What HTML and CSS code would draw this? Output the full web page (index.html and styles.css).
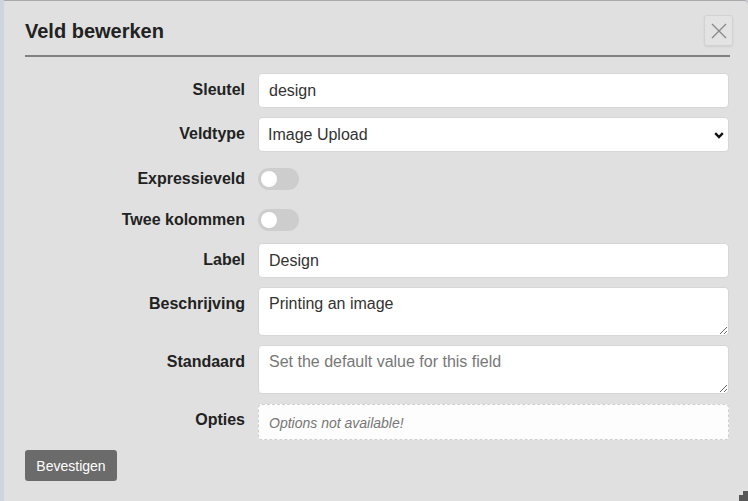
FILE: index.html
```html
<!DOCTYPE html>
<html lang="nl">
<head>
<meta charset="utf-8">
<title>Veld bewerken</title>
<link rel="stylesheet" href="styles.css">
</head>
<body>
<div class="modal">
  <div class="header">
    <h2 class="title">Veld bewerken</h2>
    <button class="close" type="button" aria-label="Sluiten">
      <svg width="16" height="16" viewBox="0 0 16 16"><path d="M1 1 L15 15 M15 1 L1 15" stroke="#8a8a8a" stroke-width="1.4" fill="none"/></svg>
    </button>
  </div>
  <div class="rule"></div>
  <form class="form">
    <label class="lbl">Sleutel</label>
    <input class="field" type="text" value="design">

    <label class="lbl">Veldtype</label>
    <div class="select-wrap">
      <select class="field select"><option>Image Upload</option></select>
      <svg class="chev" width="10" height="7" viewBox="0 0 10 7"><polyline points="1.2,1.2 5,5 8.8,1.2" fill="none" stroke="#111" stroke-width="2.4"/></svg>
    </div>

    <label class="lbl lbl-toggle">Expressieveld</label>
    <div class="toggle-cell"><span class="toggle"><span class="knob"></span></span></div>

    <label class="lbl lbl-toggle">Twee kolommen</label>
    <div class="toggle-cell"><span class="toggle"><span class="knob"></span></span></div>

    <label class="lbl">Label</label>
    <input class="field" type="text" value="Design">

    <label class="lbl">Beschrijving</label>
    <textarea class="field area">Printing an image</textarea>

    <label class="lbl">Standaard</label>
    <textarea class="field area" placeholder="Set the default value for this field"></textarea>

    <label class="lbl lbl-opties">Opties</label>
    <div class="opties">Options not available!</div>
  </form>
  <button class="submit" type="button">Bevestigen</button>
</div>
<div class="grip"><span class="g1"></span><span class="g2"></span></div>
</body>
</html>
```

FILE: styles.css
```css
html, body {
  margin: 0;
  padding: 0;
}
body {
  background: #cdd6dc;
  font-family: "Liberation Sans", Arial, sans-serif;
  color: #222;
  overflow: hidden;
  height: 501px;
}
.modal {
  margin-left: 4px;
  height: 501px;
  box-sizing: border-box;
  background: #e0e0e0;
  border-top: 1px solid #a9a9a9;
  border-top-right-radius: 4px;
  padding: 14px 18px 0 21px;
}
.header {
  display: flex;
  justify-content: space-between;
  align-items: center;
  height: 31px;
}
.title {
  margin: 0;
  font-size: 20px;
  line-height: 24px;
  font-weight: bold;
  color: #222;
}
.close {
  width: 29px;
  height: 31px;
  margin-right: -3px;
  padding: 0;
  display: flex;
  align-items: center;
  justify-content: center;
  background: #e3e3e3;
  border: 1px solid #d2d2d2;
  border-radius: 3px;
  box-shadow: 0 1px 2px rgba(0,0,0,0.08);
}
.rule {
  margin-top: 9px;
  height: 2px;
  background: #808080;
}
.form {
  margin-top: 16px;
  margin-right: 1px;
  display: grid;
  grid-template-columns: 220px 1fr;
  column-gap: 13px;
  row-gap: 9px;
}
.lbl {
  text-align: right;
  font-weight: bold;
  font-size: 16px;
  line-height: 20px;
  padding-top: 7px;
  color: #222;
}
.lbl-toggle {
  padding-top: 8px;
}
.lbl-opties {
  padding-top: 7px;
}
.field {
  box-sizing: border-box;
  width: 100%;
  height: 35px;
  margin: 0;
  padding: 0 10px;
  border: 1px solid #d6d6d6;
  border-radius: 4px;
  background: #fff;
  font-family: "Liberation Sans", Arial, sans-serif;
  font-size: 16px;
  color: #333;
  outline: none;
}
.select-wrap {
  position: relative;
}
.select {
  appearance: none;
  -webkit-appearance: none;
  padding-left: 9px;
}
.chev {
  position: absolute;
  right: 5px;
  top: 15px;
  pointer-events: none;
}
.toggle-cell {
  height: 32px;
  padding-top: 7px;
  box-sizing: border-box;
}
.toggle {
  display: flex;
  align-items: center;
  width: 41px;
  height: 22px;
  border-radius: 11px;
  background: #cdcdcd;
  padding-left: 3px;
  box-sizing: border-box;
}
.knob {
  width: 16px;
  height: 16px;
  border-radius: 50%;
  background: #fff;
}
.area {
  height: 49px;
  padding: 6px 10px;
  line-height: 20px;
  resize: both;
  display: block;
}
.area::placeholder {
  color: #777;
}
.opties {
  box-sizing: border-box;
  height: 36px;
  margin-top: 1px;
  padding: 1px 10px 0;
  display: flex;
  align-items: center;
  border: 1px dashed #cfcfcf;
  border-radius: 4px;
  background: #fdfdfd;
  font-size: 14px;
  font-style: italic;
  color: #777;
}
.submit {
  margin-top: 10px;
  height: 31px;
  width: 92px;
  padding: 0;
  border: none;
  border-radius: 3px;
  background: #6b6b6b;
  color: #fff;
  font-family: "Liberation Sans", Arial, sans-serif;
  font-size: 14px;
}
.grip {
  position: absolute;
  right: 0;
  bottom: 0;
  width: 9px;
  height: 10px;
}
.grip .g1 {
  position: absolute;
  right: 0;
  top: 0;
  width: 5px;
  height: 10px;
  background: #575757;
}
.grip .g2 {
  position: absolute;
  right: 0;
  bottom: 0;
  width: 9px;
  height: 6px;
  background: #575757;
}
```
